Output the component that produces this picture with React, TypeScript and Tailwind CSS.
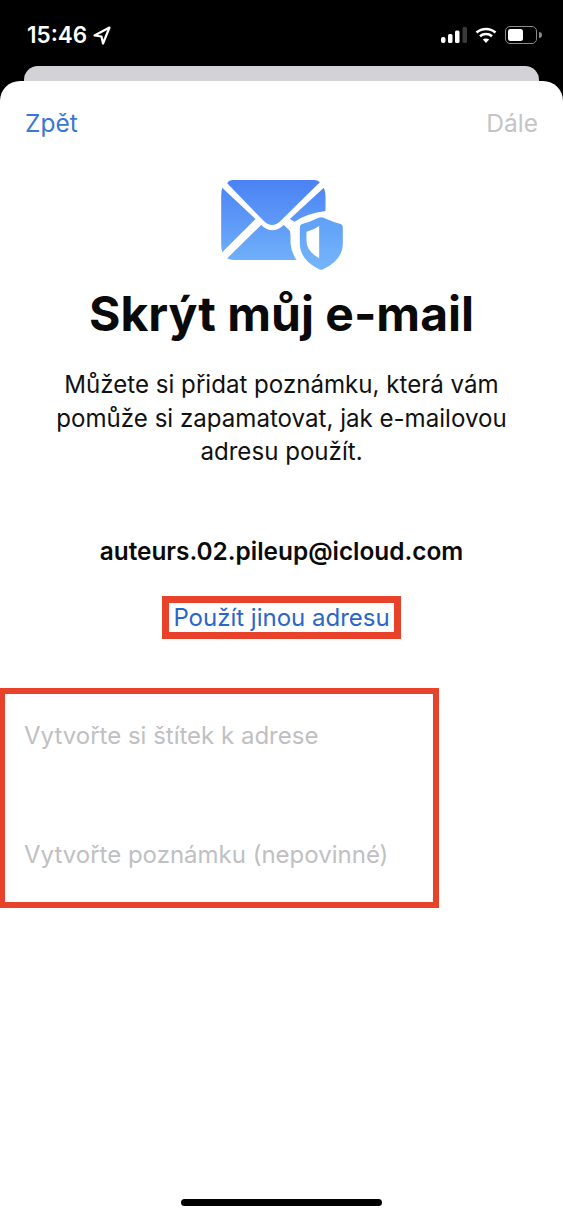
const font = "font-['Inter',sans-serif]";

function StatusBar() {
  return (
    <div className="h-[66px] flex items-start justify-between pl-[27px] pr-[21px] pt-[21px] text-white">
      <div className="flex items-center gap-[6px]">
        <span className="text-[22.500px] leading-[28px] font-semibold">15:46</span>
        <svg width="18" height="19" viewBox="0 0 18 19" fill="none" stroke="white" strokeWidth="2.200" strokeLinejoin="round">
          <path d="M16.500 1.500 1.500 9.500 8.500 10.500 10 17.500z" />
        </svg>
      </div>
      <div className="flex items-center gap-[8px] pt-[5px]">
        <svg width="26" height="16" viewBox="0 0 26 16" fill="white">
          <rect x="0" y="10" width="4.500" height="6" rx="2" />
          <rect x="7" y="7" width="4.500" height="9" rx="1.500" />
          <rect x="14" y="3.500" width="4.500" height="12.500" rx="1.500" />
          <rect x="21.500" y="0" width="4.500" height="16" rx="1.500" fill="#3a3a3c" />
        </svg>
        <svg width="22" height="16" viewBox="0 0 22 16" fill="none" stroke="white" strokeWidth="2.600">
          <path d="M1.500 5.500C7 .8 15 .8 20.500 5.500" />
          <path d="M5 9.200c3.400-2.900 8.600-2.900 12 0" />
          <path d="M11 16 7.800 12.600c1.900-1.500 4.500-1.500 6.400 0z" fill="white" stroke="none" />
        </svg>
        <div className="flex items-center gap-[2px]">
          <div className="w-[32px] h-[18px] rounded-[5px] border border-[#8a8a8a] p-[2px]">
            <div className="w-[15px] h-full rounded-[2.500px] bg-white" />
          </div>
          <div className="w-[3px] h-[6px] rounded-r-full bg-[#8a8a8a]" />
        </div>
      </div>
    </div>
  );
}

function MailIcon() {
  return (
    <svg width="122" height="90" viewBox="62 45 365 270">
      <defs>
        <linearGradient id="mail" gradientUnits="userSpaceOnUse" x1="0" y1="45" x2="0" y2="285">
          <stop offset="0" stopColor="#4a82f4" />
          <stop offset="1" stopColor="#70affa" />
        </linearGradient>
        <linearGradient id="shield" gradientUnits="userSpaceOnUse" x1="0" y1="157" x2="0" y2="315">
          <stop offset="0" stopColor="#5f9ff7" />
          <stop offset="1" stopColor="#76b6fb" />
        </linearGradient>
      </defs>
      <path d="M97 45H340Q352 45 358 52L240 168Q215 192 190 168L80 55Q86 45 97 45Z" fill="url(#mail)" />
      <path d="M65 68 165 162 65 262Q62 250 62 235V95Q62 80 65 68Z" fill="url(#mail)" />
      <path d="M370 68 268 162 282 170Q320 145 375 138V95Q375 80 370 68Z" fill="url(#mail)" />
      <path d="M182 180Q215 212 250 180L268 197Q270 205 270 215V235Q272 262 288 285H100Q88 285 80 280Z" fill="url(#mail)" />
      <path
        d="M362 157Q368 157 378 162 400 172 418 176 427 178 427 188V235Q427 285 368 313 362 316 356 313 298 285 298 235V188Q298 178 307 176 325 172 346 162 356 157 362 157Z"
        fill="url(#shield)"
      />
      <path d="M356 183V280Q318 258 318 228V200Q340 195 356 183Z" fill="white" />
    </svg>
  );
}

export default function App() {
  return (
    <div className={`w-[563px] h-[1218px] bg-black flex flex-col overflow-hidden ${font}`}>
      <StatusBar />
      <div className="mx-[24px] h-[15px] bg-[#d2d2d7] rounded-t-[14px]" />
      <div className="flex-1 bg-white rounded-t-[20px] flex flex-col">
        <div className="flex justify-between pl-[25px] pr-[25px] pt-[26px] text-[24.500px] leading-[32px]">
          <span className="text-[#3a77d6]">Zpět</span>
          <span className="text-[#c4c4c6]">Dále</span>
        </div>
        <div className="flex justify-center pt-[41px]">
          <MailIcon />
        </div>
        <h1 className="text-[48px] leading-[60px] font-bold text-center text-[#0a0a0a] mt-[14px]">Skrýt můj e-mail</h1>
        <p className="text-[24.100px] leading-[33.500px] text-center text-[#111] mt-[24px] px-[40px]">
          Můžete si přidat poznámku, která vám pomůže si zapamatovat, jak e-mailovou adresu použít.
        </p>
        <p className="text-[24.400px] leading-[30px] font-semibold text-center text-[#0a0a0a] mt-[67px]">
          auteurs.02.pileup@icloud.com
        </p>
        <div className="flex justify-center mt-[30px]">
          <div className="border-[7px] border-[#e8432a] h-[43px] w-[239px] flex items-center justify-center pt-[2px] text-[24px] text-[#2a66cc] leading-none whitespace-nowrap">
            Použít jinou adresu
          </div>
        </div>
        <div className="mt-[49px] w-[439px] h-[220px] border-[6px] border-[#e8432a] border-l-[5px] pl-[19px] text-[24px] leading-[32px] text-[#c0c0c2] flex flex-col pt-[26px] gap-[87px]">
          <span>Vytvořte si štítek k adrese</span>
          <span>Vytvořte poznámku (nepovinné)</span>
        </div>
        <div className="mt-auto flex justify-center pb-[12px]">
          <div className="w-[201px] h-[7px] rounded-full bg-black" />
        </div>
      </div>
    </div>
  );
}
